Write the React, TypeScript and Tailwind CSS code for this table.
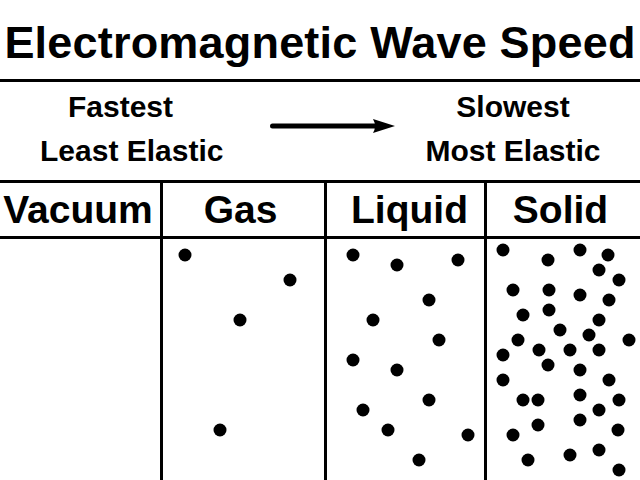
const gasDots = [
  [185, 255], [290, 280], [240, 320], [220, 430],
];

const liquidDots = [
  [353, 255], [397, 265], [458, 260], [429, 300], [373, 320], [439, 340],
  [353, 360], [397, 370], [429, 400], [363, 410], [388, 430], [468, 435],
  [419, 460],
];

const solidDots = [
  [503, 250], [548, 260], [580, 250], [608, 255], [599, 270], [619, 280],
  [513, 290], [549, 290], [580, 295], [609, 300], [523, 315], [549, 310],
  [599, 320], [560, 330], [589, 335], [629, 340], [518, 340], [539, 350],
  [570, 350], [599, 350], [503, 355], [548, 365], [580, 370], [503, 380],
  [609, 380], [523, 400], [538, 400], [580, 395], [619, 400], [599, 410],
  [580, 420], [538, 425], [513, 435], [618, 430], [599, 450], [570, 455],
  [528, 460], [619, 470],
];

// x0 = left edge of the column content (after its border)
const DotField = ({ dots, x0, w }: { dots: number[][]; x0: number; w: number }) => (
  <svg width={w} height={241} viewBox={`${x0} 239 ${w} 241`} className="block">
    {dots.map(([cx, cy], i) => (
      <circle key={i} cx={cx} cy={cy} r={6.5} fill="#000" />
    ))}
  </svg>
);

const Arrow = () => (
  <svg width="128" height="20" viewBox="0 0 128 20" className="block">
    <line x1="2.5" y1="10" x2="110" y2="10" stroke="#000" strokeWidth="5" strokeLinecap="round" />
    <path d="M103 3 L125 10 L103 17 Q107 10 103 3 Z" fill="#000" />
  </svg>
);

export default function App() {
  return (
    <div
      className="w-[640px] h-[480px] overflow-hidden bg-white text-black font-bold"
      style={{ fontFamily: '"Liberation Sans", Arial, sans-serif' }}
    >
      {/* title */}
      <div className="h-[82px] pt-[20px] border-b-[3px] border-black text-center text-[45px] leading-[45px] tracking-[0.2px]">
        Electromagnetic Wave Speed
      </div>

      {/* speed scale */}
      <div className="h-[98px] pt-[3px] grid grid-cols-[270px_128px_1fr] text-[30px] leading-[44px]">
        <div>
          <div className="pl-[68px]">Fastest</div>
          <div className="pl-[40px]">Least Elastic</div>
        </div>
        <div className="pt-[31px]">
          <Arrow />
        </div>
        <div className="text-center pr-[12px]">
          <div>Slowest</div>
          <div>Most Elastic</div>
        </div>
      </div>

      {/* table */}
      <div className="grid grid-cols-[160px_164px_160px_1fr] border-t-[3px] border-black">
        <div className="h-[56px] border-b-[3px] border-black flex items-center justify-center text-[39px] leading-[39px] pr-[4px]">
          Vacuum
        </div>
        <div className="h-[56px] border-b-[3px] border-l-[3px] border-black flex items-center justify-center text-[39px] leading-[39px] pr-[6px]">
          Gas
        </div>
        <div className="h-[56px] border-b-[3px] border-l-[3px] border-black flex items-center justify-center text-[39px] leading-[39px] pl-[8px]">
          Liquid
        </div>
        <div className="h-[56px] border-b-[3px] border-l-[3px] border-black flex items-center justify-center text-[39px] leading-[39px] pr-[6px]">
          Solid
        </div>

        <div className="h-[241px]" />
        <div className="h-[241px] border-l-[3px] border-black">
          <DotField dots={gasDots} x0={163} w={161} />
        </div>
        <div className="h-[241px] border-l-[3px] border-black">
          <DotField dots={liquidDots} x0={327} w={157} />
        </div>
        <div className="h-[241px] border-l-[3px] border-black">
          <DotField dots={solidDots} x0={487} w={153} />
        </div>
      </div>
    </div>
  );
}
